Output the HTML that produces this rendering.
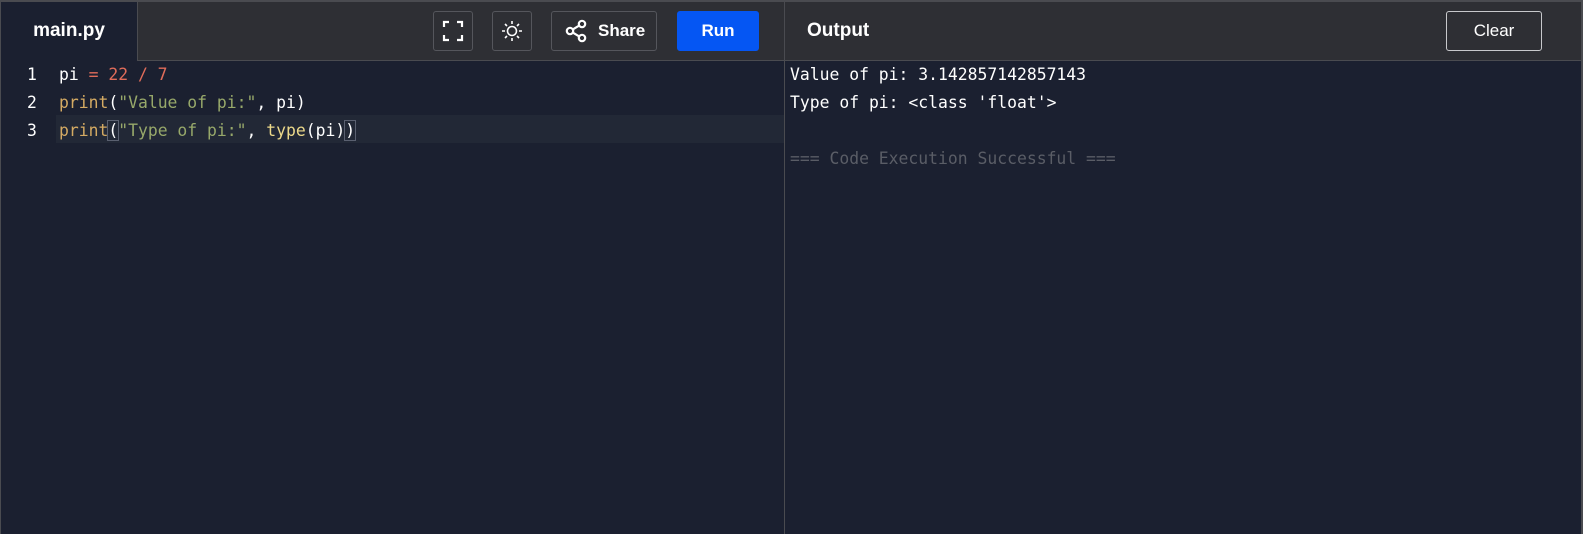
<!DOCTYPE html>
<html><head><style>
*{margin:0;padding:0;box-sizing:border-box}
body{width:1583px;height:534px;background:#1b2030;overflow:hidden;font-family:"Liberation Sans",sans-serif;position:relative}
.top{position:absolute;left:0;top:0;width:1583px;height:61px;background:#2e2f34;border-top:2px solid #4a4b50;border-bottom:1px solid #4a4b50}
.lb{position:absolute;left:0;top:0;width:1px;height:534px;background:#4a4b50}
.rb{position:absolute;right:0;top:0;width:2px;height:534px;background:#4a4b50}
.tab{position:absolute;left:1px;top:2px;width:137px;height:59px;background:#1b2030;border-right:1px solid #4a4b50;color:#fff;font-weight:bold;font-size:19px;line-height:58px;text-align:center}
.btn{position:absolute;top:11px;height:40px;border:1px solid #55565c;border-radius:3px;color:#fff;font-weight:bold;font-size:17px;display:flex;align-items:center;justify-content:center}
.div{position:absolute;left:784px;top:2px;width:1px;height:532px;background:#4a4b50}
.mono{font-family:"DejaVu Sans Mono","Liberation Mono",monospace;font-size:16.4px;position:absolute;white-space:pre;line-height:28px}
</style></head><body>
<div class="top"></div>
<div class="tab">main.py</div>
<div class="btn" style="left:433px;width:40px"><svg width="22" height="22" viewBox="0 0 22 22" fill="none" stroke="#fff" stroke-width="2.2"><path d="M2 7V2h5M15 2h5v5M20 15v5h-5M7 20H2v-5"/></svg></div>
<div class="btn" style="left:492px;width:40px"><svg width="22" height="22" viewBox="0 0 22 22" fill="none" stroke="#fff" stroke-width="1.6"><circle cx="11" cy="11" r="4.5"/><path d="M11 1v3M11 18v3M1 11h3M18 11h3M4 4l2 2M16 16l2 2M4 18l2-2M16 6l2-2"/></svg></div>
<div class="btn" style="left:551px;width:106px;justify-content:flex-start;padding-left:13px"><svg width="22" height="24" viewBox="0 0 22 24" fill="none" stroke="#fff" stroke-width="2.2"><circle cx="5" cy="12" r="3.2"/><circle cx="17" cy="5" r="3.2"/><circle cx="17" cy="19" r="3.2"/><path d="M8 10.3l6-3.6M8 13.7l6 3.6"/></svg><span style="margin-left:11px">Share</span></div>
<div class="btn" style="left:677px;width:82px;background:#0556f3;border-color:#0556f3">Run</div>
<div style="position:absolute;left:807px;top:20px;color:#fff;font-weight:bold;font-size:19px">Output</div>
<div class="btn" style="left:1446px;width:96px;border-color:#c8c9cc;font-weight:normal;color:#fff">Clear</div>
<div class="div"></div>
<div class="lb"></div><div class="rb"></div>
<div style="position:absolute;left:56px;top:115px;width:728px;height:28px;background:#222836"></div>
<div class="mono" style="left:27px;top:61px;color:#fff">1
2
3</div>
<div class="mono" style="left:59px;top:61px;color:#fff">pi <span style="color:#e06c5a">= 22 / 7</span>
<span style="color:#d4aa63">print</span>(<span style="color:#97a86a">"Value of pi:"</span>, pi)
<span style="color:#d4aa63">print</span><span style="outline:1px solid #5a6070">(</span><span style="color:#97a86a">"Type of pi:"</span>, <span style="color:#ecd98a">type</span>(pi)<span style="outline:1px solid #5a6070">)</span></div>
<div class="mono" style="left:790px;top:61px;color:#fff">Value of pi: 3.142857142857143
Type of pi: &lt;class 'float'&gt;

<span style="color:#5a5d66">=== Code Execution Successful ===</span></div>
</body></html>
